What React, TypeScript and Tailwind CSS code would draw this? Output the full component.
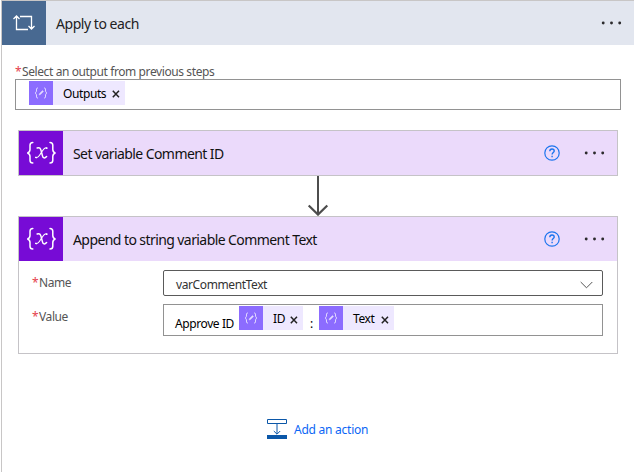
import type { ReactNode } from "react";

function Dots() {
  return (
    <svg width="22" height="4" viewBox="0 0 22 4" fill="#2b2a2c" className="block">
      <circle cx="2.2" cy="2" r="1.45" />
      <circle cx="10.5" cy="2" r="1.45" />
      <circle cx="18.7" cy="2" r="1.45" />
    </svg>
  );
}

function Help() {
  return (
    <svg width="16" height="16" viewBox="0 0 16 16" fill="none" stroke="#1b74ee" className="block">
      <circle cx="8" cy="8" r="7.2" strokeWidth="1.2" />
      <path d="M5.8 6.2C5.8 4.8 6.700 4 8 4s2.200.8 2.200 2C10.200 7.500 8.100 7.700 8.100 9.600" strokeWidth="1.400" />
      <path d="M7.400 11.500h1.400" strokeWidth="1.500" />
    </svg>
  );
}

function VariableIcon() {
  return (
    <div className="flex size-11 shrink-0 items-center justify-center bg-[#770bd6]">
      <svg width="32" height="24" viewBox="0 0 32 24" fill="none" stroke="#fff" strokeLinecap="round" className="block">
        <path d="M7.800 1.500C5.700 1.500 5 2.300 5 4.300V8.500c0 2-.7 3.100-2.700 3.500 2 .4 2.700 1.500 2.700 3.500v3.700c0 2 .7 2.800 2.800 2.800" strokeWidth="1.500" />
        <path d="M25 1.500c2.100 0 2.800.8 2.800 2.800V8.500c0 2 .7 3.100 2.700 3.500-2 .4-2.700 1.500-2.700 3.500v3.700c0 2-.7 2.800-2.800 2.800" strokeWidth="1.500" />
        <path d="M12.200 7c2.400-.9 3.300.2 3.900 2.600l1.300 5c.6 2.500 2.100 3.300 4.200 1" strokeWidth="1.500" />
        <path d="M22 7c-1.700-1-3.100.4-5.200 3.800l-1.900 3c-1.600 2.600-2.700 3.500-4.400 2.500" strokeWidth="1.100" />
        <path d="M21.300 7.300h.5M10.900 16.400h.5" strokeWidth="1.500" />
      </svg>
    </div>
  );
}

function Close() {
  return (
    <svg width="8" height="8" viewBox="0 0 8 8" stroke="#222" strokeWidth="1.500" className="block">
      <path d="M.8.8l6.200 6.400M7 .8L.8 7.200" />
    </svg>
  );
}

function Token({ children, className }: { children: ReactNode; className: string }) {
  return (
    <div className={`flex h-6 shrink-0 bg-[#eee8ff] text-[12px] tracking-[-0.4px] text-black ${className}`}>
      <div className="flex size-6 shrink-0 items-center justify-center bg-[#8c6cff]">
        <svg width="14" height="12" viewBox="0 0 14 12" fill="none" stroke="#e3daff" strokeWidth="1" className="block">
          <path d="M4 1C2.500 1 2.500 1.500 2.500 3c0 1.700-.3 2.500-1.500 3 1.200.5 1.500 1.300 1.500 3 0 1.500 0 2 1.500 2M10 1c1.500 0 1.500.5 1.500 2 0 1.700.3 2.500 1.500 3-1.200.5-1.500 1.300-1.500 3 0 1.500 0 2-1.500 2" />
          <path d="M5 8l.5-1.500L8.500 3.500l1 1L6.500 7.500z" fill="#e3daff" strokeWidth=".4" />
        </svg>
      </div>
      {children}
    </div>
  );
}

function CardHeader({ children }: { children: ReactNode }) {
  return (
    <div className="flex h-11 items-center bg-[#ebdafb]">
      <VariableIcon />
      <div className="ml-[10px] flex-1 pt-px text-[14px] tracking-[-0.58px] text-[#111]">{children}</div>
      <div className="-mt-[1px] mr-[24px]"><Help /></div>
      <div className="mr-[11px]"><Dots /></div>
    </div>
  );
}

function Label({ children }: { children: ReactNode }) {
  return (
    <div className="flex whitespace-nowrap text-[12px] leading-[16px] tracking-[-0.4px] text-[#555]">
      <span className="w-[7px] text-[#e5404c]">*</span>
      {children}
    </div>
  );
}

export default function App() {
  return (
    <div className="h-[472px] w-[634px] overflow-hidden bg-white pl-px font-['Noto_Sans','Open_Sans',sans-serif]">
      <div className="h-full border-l border-t border-[#c8c6c6]">
        <div className="flex h-11 items-center bg-[#e2e6ef]">
          <div className="flex size-11 items-center justify-center bg-[#486991]">
            <svg width="24" height="18" viewBox="0 0 24 18" fill="none" stroke="#fff" strokeWidth="1.300" className="block">
              <path d="M4.500 2v13.500H16M1.500 5L4.500 2l3 3M8 2.500h11.500V15M16.500 12l3 3 3-3" />
            </svg>
          </div>
          <div className="ml-[10px] flex-1 pt-[1px] text-[14px] tracking-[-0.46px] text-[#222]">Apply to each</div>
          <div className="mr-[11px]"><Dots /></div>
        </div>

        <div className="ml-[13px] mt-[19px] w-[606px]">
          <Label><span>Select an output from previous steps</span></Label>
          <div className="-mt-[1px] h-[31px] border border-[#929292] pl-[13px] pt-[1px]">
            <Token className="w-24">
              <span className="ml-[10px] w-[46px] leading-[25px]">Outputs</span>
              <span className="ml-[3px] mt-[9px]"><Close /></span>
            </Token>
          </div>
        </div>

        <div className="ml-[16px] mt-[20px] w-[600px]">
          <div className="border border-[#c5c3c7]">
            <CardHeader>Set variable Comment ID</CardHeader>
          </div>
          <div className="flex h-10 justify-center">
            <svg width="22" height="40" viewBox="0 0 22 40" fill="none" stroke="#4d4d4d" className="block">
              <path d="M11 0v38" strokeWidth="2" />
              <path d="M1.700 29.500L11 38.600l9.300-9.100" strokeWidth="2.200" />
            </svg>
          </div>
          <div className="h-[138px] border border-[#c5c3c7]">
            <CardHeader>Append to string variable Comment Text</CardHeader>
            <div className="mt-[9px] flex h-[27px] pl-[13px]">
              <div className="w-[131px] pt-[5px]"><Label><span>Name</span></Label></div>
              <div className="flex h-[26px] w-[440px] items-center justify-between rounded-[2px] border border-[#5a5a5a] pl-[12px] pr-[9px] text-[12px] tracking-[-0.4px] text-[#333]">
                <span className="pt-[3px]">varCommentText</span>
                <svg width="13" height="8" viewBox="0 0 13 8" fill="none" stroke="#555" strokeWidth="1" className="mt-[4px] block"><path d="M.7 1l5.800 5.800L12.300 1" /></svg>
              </div>
            </div>
            <div className="mt-[7px] flex pl-[13px]">
              <div className="w-[131px] pt-[5px]"><Label><span>Value</span></Label></div>
              <div className="flex h-[32px] w-[440px] border border-[#929292] pl-[11px] pt-[1px] text-[12px] leading-[16px] tracking-[-0.4px] text-black">
                <span className="w-[64px] shrink-0 whitespace-nowrap pt-[10px]">Approve ID</span>
                <Token className="w-16">
                  <span className="ml-[10px] w-[14px] leading-[25px] tracking-[-0.2px]">ID</span>
                  <span className="ml-[3px] mt-[10px]"><Close /></span>
                </Token>
                <span className="w-[16px] pl-[7px] pt-[10px]">:</span>
                <Token className="w-[75px]">
                  <span className="ml-[10px] w-[24px] leading-[25px]">Text</span>
                  <span className="ml-[4px] mt-[10px]"><Close /></span>
                </Token>
              </div>
            </div>
          </div>
        </div>

        <div className="ml-[265px] mt-[65px] flex">
          <svg width="20" height="20" viewBox="0 0 20 20" fill="none" stroke="#0b57a8" className="block">
            <path d="M.5.5h19v4H.5zM10 5v10M6.800 12l3.200 3.200 3.200-3.200" />
            <path d="M0 16h20v4H0z" fill="#0b57a8" stroke="none" />
          </svg>
          <span className="ml-[7px] mt-[3px] text-[12px] leading-[16px] tracking-[-0.25px] text-[#0b66f5]">Add an action</span>
        </div>
      </div>
    </div>
  );
}
